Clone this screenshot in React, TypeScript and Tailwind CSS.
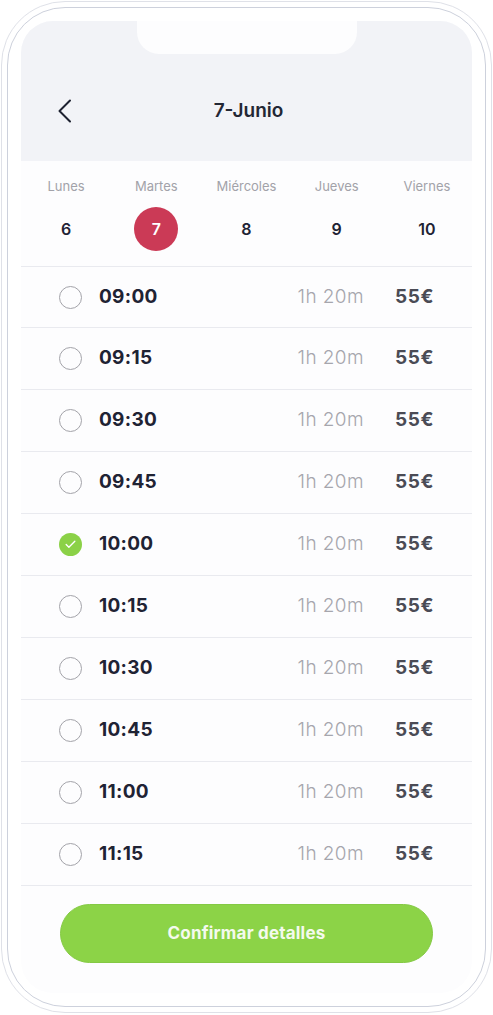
import { Check } from "lucide-react";

const days = [
    { label: "Lunes", num: "6" },
    { label: "Martes", num: "7", active: true },
    { label: "Miércoles", num: "8" },
    { label: "Jueves", num: "9" },
    { label: "Viernes", num: "10" },
];

const slots = ["09:00", "09:15", "09:30", "09:45", "10:00", "10:15", "10:30", "10:45", "11:00", "11:15"];

function SlotRow({ time, selected, first }: { time: string; selected?: boolean; first?: boolean }) {
    return (
        <div className={`${first ? "h-[61px]" : "h-[62px]"} border-b border-[#e9eaef] flex items-center pl-[38px] pr-[38px]`}>
            {selected ? (
                <span className="w-[23px] h-[23px] rounded-full bg-[#8bd147] flex items-center justify-center">
                    <Check size={13} strokeWidth={2.5} className="text-white" />
                </span>
            ) : (
                <span className="w-[23px] h-[23px] rounded-full border-[1.5px] border-[#a3a3a9]" />
            )}
            <span className="ml-[17px] flex-1 text-[19px] font-bold text-[#1f2334] tracking-[0.3px]">{time}</span>
            <span className="text-[19px] font-light text-[#a6a6ad] tracking-[0.4px]">1h 20m</span>
            <span className="ml-[31px] text-[19px] font-bold text-[#4a4b55] tracking-[0.6px]">55€</span>
        </div>
    );
}

export default function App() {
    return (
        <div className="w-[493px] h-[1015px] bg-white p-[1px]" style={{ fontFamily: "Inter, 'Open Sans', sans-serif" }}>
            <div className="w-[491px] h-[1012px] rounded-[64px] border border-[#dfe1e8] p-[5px]">
                <div className="h-full rounded-[58px] border border-[#cdd1dc] p-[13px]">
                    <div className="h-full rounded-[32px] bg-[#fdfdfe] overflow-hidden flex flex-col">
                        {/* header */}
                        <div className="relative h-[140px] bg-[#f2f3f7] shrink-0">
                            <div className="absolute top-0 left-[116px] w-[220px] h-[33px] bg-[#fdfdfe] rounded-b-[22px]" />
                            <div className="pt-[70px] grid grid-cols-[1fr_auto_1fr] items-center h-[110px] pl-[36px] pr-[32px]">
                                <svg width="15" height="24" viewBox="0 0 15 24" fill="none">
                                    <polyline points="13,1.5 2.5,12 13,22.5" stroke="#1d2130" strokeWidth="2" strokeLinecap="round" strokeLinejoin="round" />
                                </svg>
                                <span className="text-[19px] font-semibold text-[#232734]">7-Junio</span>
                                <span />
                            </div>
                        </div>

                        {/* days */}
                        <div className="h-[106px] border-b border-[#e9eaef] grid grid-cols-5 shrink-0 pt-[17px]">
                            {days.map((d) => (
                                <div key={d.label} className="flex flex-col items-center">
                                    <span className="h-[16px] leading-[16px] text-[13px] text-[#a2a2a9]">{d.label}</span>
                                    <span
                                        className={`mt-[13px] w-[44px] h-[44px] rounded-full flex items-center justify-center text-[16px] font-semibold ${
                                            d.active ? "bg-[#cb3a56] text-white" : "text-[#1f2334]"
                                        }`}
                                    >
                                        {d.num}
                                    </span>
                                </div>
                            ))}
                        </div>

                        {/* slots */}
                        <div className="flex flex-col">
                            {slots.map((t, i) => (
                                <SlotRow key={t} time={t} selected={t === "10:00"} first={i === 0} />
                            ))}
                        </div>

                        <div className="pt-[18px] px-[39px]">
                            <button className="w-full h-[59px] rounded-full bg-[#8cd347] border border-[#84c944] text-[#f4faee] text-[17px] font-bold tracking-[0.2px]">
                                Confirmar detalles
                            </button>
                        </div>
                    </div>
                </div>
            </div>
        </div>
    );
}
